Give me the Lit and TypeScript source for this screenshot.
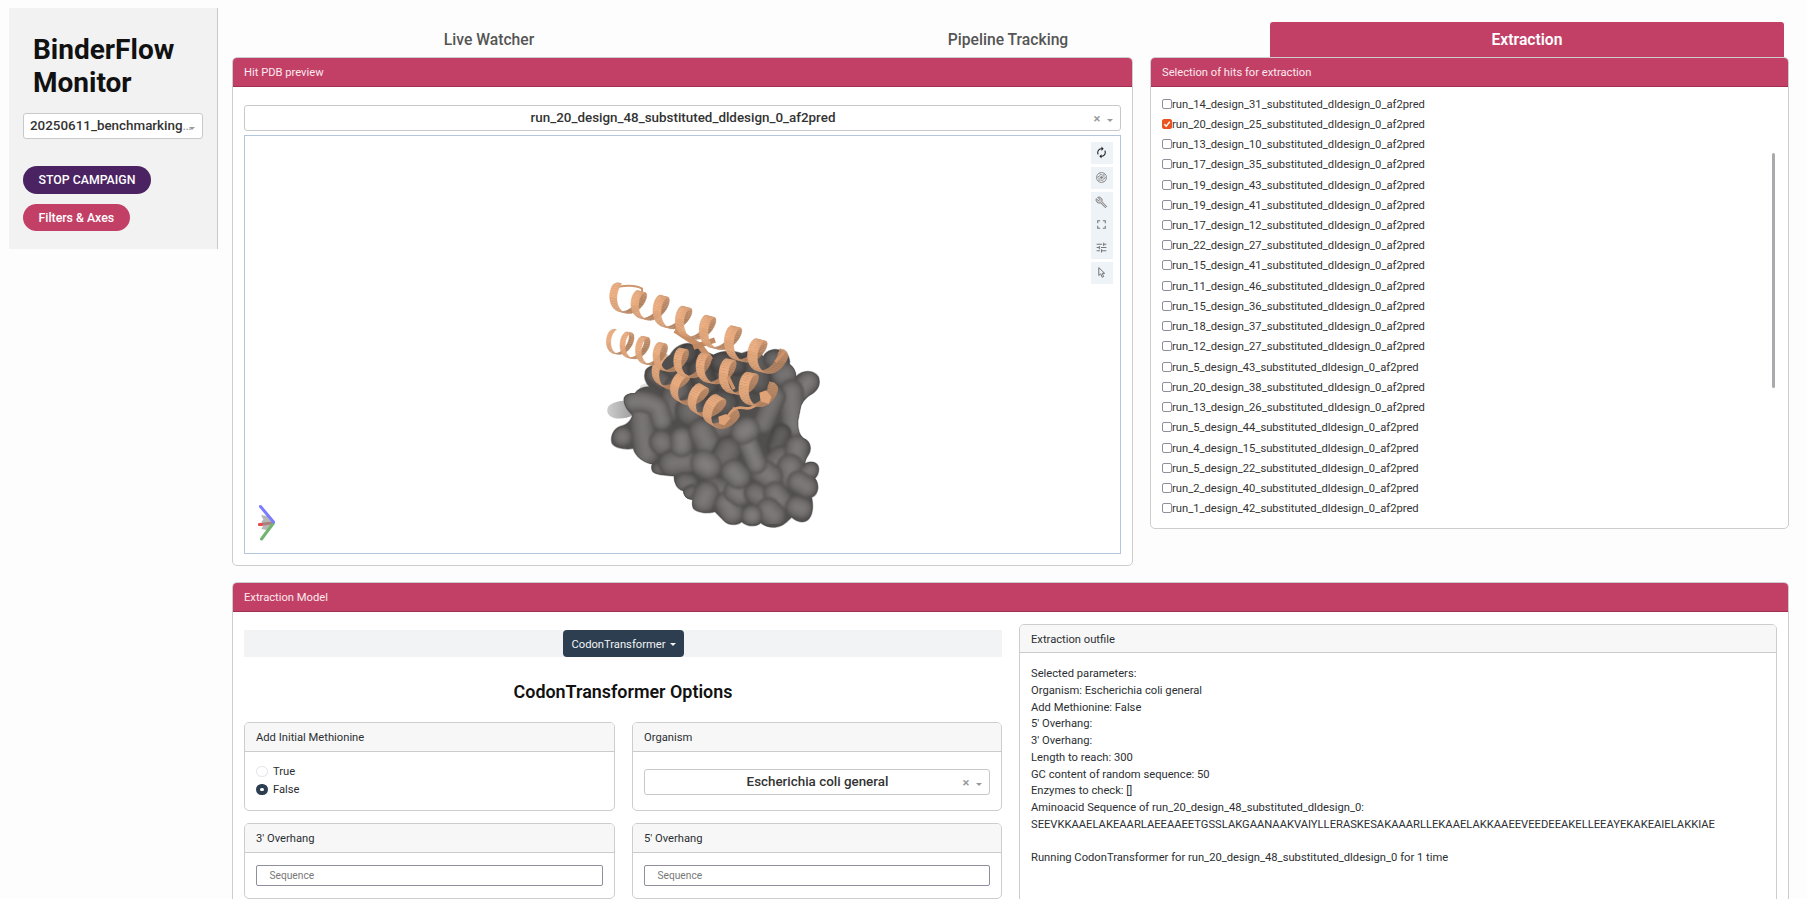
import { LitElement, html, svg, css } from "lit";
import { customElement, property } from "lit/decorators.js";

type Pt = [number, number];

/* ---------- protein scene ---------- */

const SURFACE =
  "M165,340C165,322 185,318 205,310L240,285C260,250 300,240 320,262L370,285C400,270 430,272 455,280C480,270 505,270 520,290C530,268 560,262 580,275C600,285 600,305 598,312C615,325 618,340 618,350C635,330 670,328 685,350C695,375 680,395 660,405C645,415 635,430 632,440L624,480C622,510 628,525 640,535C665,545 665,570 655,585C645,600 645,607 645,611C660,602 685,605 686,625C687,640 680,650 675,655C690,675 685,705 665,712C670,735 670,770 650,782C635,790 620,785 605,772C590,785 580,800 555,802C530,803 520,795 512,788C500,802 470,800 455,785C445,795 420,798 405,785C395,775 385,765 375,755C355,762 320,758 310,745C305,735 308,725 308,718C290,720 280,705 280,692C262,688 252,670 252,648C225,645 190,645 186,630C183,620 187,612 187,612C165,610 135,590 130,565C110,570 75,565 66,550C60,530 70,505 95,498C110,495 125,480 128,465C115,455 100,435 102,415C108,400 125,400 135,400C145,385 160,380 178,380C165,365 162,350 165,340Z";

/* [centre line, thickness, brightness] */
const LOBES: [string, number, number][] = [
  ["M296,290L300,272", 52, 0.7],
  ["M390,305L440,315", 66, 0.74],
  ["M330,330L350,380", 76, 0.74],
  ["M500,300L505,365", 80, 0.8],
  ["M550,298L565,305", 60, 0.9],
  ["M578,345L588,340", 72, 0.97],
  ["M655,365L632,392", 66, 1.03],
  ["M605,395L610,500", 74, 1],
  ["M555,410L520,490", 66, 0.97],
  ["M575,520L560,560", 60, 0.8],
  ["M192,345L220,365", 56, 0.85],
  ["M260,390L240,450", 84, 0.9],
  ["M300,450L300,455", 90, 0.92],
  ["M390,430L405,430", 84, 0.8],
  ["M155,460L160,520L170,580", 78, 0.98],
  ["M130,425C160,420 190,430 205,445L215,480", 66, 1.02],
  ["M97,530L97,530", 64, 1],
  ["M213,545L216,550", 74, 1],
  ["M205,628L225,625", 46, 0.88],
  ["M245,610L285,605", 80, 0.98],
  ["M275,535L275,558", 68, 1.04],
  ["M385,505L400,500", 74, 0.92],
  ["M335,515L350,545", 80, 1],
  ["M405,590L415,570", 84, 0.92],
  ["M283,668L295,670", 64, 0.94],
  ["M297,700L305,695", 44, 0.9],
  ["M575,600L560,615", 88, 0.98],
  ["M622,560L618,590", 72, 1.02],
  ["M605,650L600,620", 80, 1.02],
  ["M662,630L650,640", 50, 1],
  ["M520,635L540,650", 78, 1.02],
  ["M370,680L405,690", 70, 0.94],
  ["M340,722L350,700", 76, 1.02],
  ["M425,757L410,730", 74, 1.02],
  ["M435,695L450,705", 70, 1.02],
  ["M495,700L510,710", 68, 0.98],
  ["M555,700L570,720", 72, 1.02],
  ["M635,745L620,740", 68, 1.02],
  ["M650,680L625,665", 68, 1.02],
  ["M550,765L535,750", 76, 1.02],
  ["M486,766L486,766", 64, 1.05],
  ["M430,635L445,650", 76, 1.04],
  ["M342,610L354,618", 82, 1.06],
  ["M475,550L500,612", 62, 1.04],
  ["M460,516L472,508", 76, 1.06],
];

const LOBE_STEPS: [number, number][] = [
  [1, 80],
  [0.94, 87],
  [0.86, 94],
  [0.76, 101],
  [0.64, 107],
  [0.5, 112],
  [0.36, 116],
  [0.2, 119],
];

const gray = (v: number) => {
  const n = Math.round(v);
  return `rgb(${n + 2},${n - 1},${n - 2})`;
};

const lobe = ([d, w, b]: [string, number, number]) =>
  LOBE_STEPS.map(
    ([k, v]) => svg`<path d=${d} stroke=${gray(v * b)} stroke-width=${w * k}></path>`
  );

interface Quad { z: number; d: string; fill: string; }

/* Ribbon wound round an axis; one axis point per turn. */
function helix(axis: Pt[], r0: number, r1: number, w0: number, w1: number, tilt: number): Quad[] {
  const N = 32;
  const total = (axis.length - 1) * N;
  const at = (s: number): Pt => {
    const i = Math.max(0, Math.min(axis.length - 2, Math.floor(s)));
    const f = s - i;
    return [axis[i][0] + (axis[i + 1][0] - axis[i][0]) * f, axis[i][1] + (axis[i + 1][1] - axis[i][1]) * f];
  };
  const first = axis[0];
  const last = axis[axis.length - 1];
  const len = Math.hypot(last[0] - first[0], last[1] - first[1]);
  const a: Pt = [(last[0] - first[0]) / len, (last[1] - first[1]) / len];
  const p: Pt = [a[1], -a[0]];
  const edge = (i: number) => {
    const s = i / N;
    const k = i / total;
    const th = s * Math.PI * 2;
    const r = r0 + (r1 - r0) * k;
    const taper = Math.min(1, 0.35 + i / 6, 0.35 + (total - i) / 6);
    const w = ((w0 + (w1 - w0) * k) / 2) * taper;
    const c = at(s);
    const up = Math.cos(th) * r;
    const along = Math.sin(th) * r * -tilt;
    const x = c[0] + p[0] * up + a[0] * along;
    const y = c[1] + p[1] * up + a[1] * along;
    const wx = a[0] * w + p[0] * w * 0.15;
    const wy = a[1] * w + p[1] * w * 0.15;
    return { l: [x - wx, y - wy] as Pt, h: [x + wx, y + wy] as Pt, z: Math.sin(th), c: Math.cos(th) };
  };
  const out: Quad[] = [];
  for (let i = 0; i < total; i++) {
    const e = edge(i);
    const f = edge(i + 1);
    const z = (e.z + f.z) / 2;
    const facing = Math.abs(z);
    const light = z > 0 ? 0.88 + 0.12 * Math.pow(facing, 0.6) : 0.86 - 0.09 * facing;
    const v = light + (e.c > 0 ? 0.01 : -0.02);
    out.push({
      z,
      d: [e.l, e.h, f.h, f.l].map((q) => q.map((n) => n.toFixed(1)).join(",")).join(" "),
      fill: `rgb(${Math.round(231 * v)},${Math.round(170 * v)},${Math.round(126 * v)})`,
    });
  }
  return out.sort((m, n) => m.z - n.z);
}

const HELICES = [
  helix([[205, 312], [262, 374], [318, 410], [368, 444], [408, 476]], 38, 42, 24, 30, 0.6),
  helix([[66, 242], [107, 252], [154, 266], [205, 286], [268, 304], [335, 320], [408, 338], [472, 380], [528, 408]], 35, 44, 13, 31, 0.6),
  helix([[76, 106], [140, 132], [207, 146], [274, 180], [345, 208], [422, 240], [497, 280], [558, 308]], 39, 44, 22, 31, 0.6),
];

const ribbon = (quads: Quad[]) =>
  quads.map((q) => svg`<polygon points=${q.d} fill=${q.fill} stroke=${q.fill} stroke-width="1"></polygon>`);

@customElement("protein-scene")
class ProteinScene extends LitElement {
  static styles = css`
    :host { display: block; width: 250px; height: 280px; }
    svg { display: block; width: 250px; height: 280px; }
  `;
  render() {
    return html`<svg viewBox="0 0 750 840">
      <defs>
        <clipPath id="surf"><path d=${SURFACE}></path></clipPath>
        <filter id="soft" x="-5%" y="-5%" width="110%" height="110%"><feGaussianBlur stdDeviation="2.8"></feGaussianBlur></filter>
        <linearGradient id="fog" x1="0" x2="1" y1="0" y2="0">
          <stop offset="0" stop-color="#cdcdcd"></stop>
          <stop offset="1" stop-color="#9c9c9c"></stop>
        </linearGradient>
      </defs>
      <path d="M150,378C165,366 185,368 190,380L150,395Z" fill="#e2e2e2"></path>
      <path d="M52,448C54,430 80,425 108,420L132,465C112,475 90,478 72,474C58,470 50,460 52,448Z" fill="url(#fog)"></path>
      <path d=${SURFACE} fill="#514f4e"></path>
      <g clip-path="url(#surf)"><g filter="url(#soft)" fill="none" stroke-linecap="round" stroke-linejoin="round">${LOBES.map(lobe)}</g></g>
      <path d=${SURFACE} fill="none" stroke="#454342" stroke-opacity=".45" stroke-width="4"></path>
      <path d="M255,210C280,225 300,240 330,258L362,300" fill="none" stroke="#c98f66" stroke-width="18"></path>
      <path d="M310,262L375,240" fill="none" stroke="#c08860" stroke-width="16"></path>
      ${ribbon(HELICES[0])}
      <path d="M408,478C425,445 440,440 462,444C490,450 500,428 532,420" fill="none" stroke="#d99c70" stroke-width="8"></path>
      ${ribbon(HELICES[1])}
      <path d="M385,470L408,462L422,474L404,496L388,492Z" fill="#dfa276"></path>
      <path d="M508,398L528,391L545,410L536,432L512,424Z" fill="#e0a377"></path>
      <path d="M414,350L432,388" stroke="#cf936a" stroke-width="10"></path>
      <path d="M84,80C110,76 140,76 156,86L156,130" fill="none" stroke="#d0966c" stroke-width="6"></path>
      ${ribbon(HELICES[2])}
      <path d="M556,306L583,276" stroke="#cf936a" stroke-width="8"></path>
    </svg>`;
  }
}

/* ---------- small widgets ---------- */

@customElement("pick-box")
class PickBox extends LitElement {
  static styles = css`
    :host { display: flex; box-sizing: border-box; height: 26px; border: 1px solid #c9c9c9; border-radius: 3px; background: #fff;
      align-items: center; font: 500 13.4px Roboto, sans-serif; color: #333; padding: 0 7px 0 5px; }
    .value { flex: 1; text-align: center; white-space: nowrap; padding-left: 25px; line-height: 22px; margin-top: -1px; }
    .value.left { text-align: left; padding-left: 1px; }
    .more { color: #999; font-weight: 400; }
    .x { font-size: 13px; color: #999; width: 12px; text-align: center; }
    .arrow { width: 0; border: 3px solid transparent; border-top-color: #999; border-bottom: 0; margin: 4px 0 0 4px; }
    .left ~ .arrow { margin-left: -8px; }
  `;
  @property() value = "";
  @property({ type: Boolean }) compact = false;
  render() {
    return html`<span class="value ${this.compact ? "left" : ""}">${this.value}${this.compact ? html`<span class="more">…</span>` : ""}</span>
      ${this.compact ? "" : html`<span class="x">×</span>`}<span class="arrow"></span>`;
  }
}

@customElement("panel-card")
class PanelCard extends LitElement {
  static styles = css`
    :host { display: flex; flex-direction: column; box-sizing: border-box; border: 1px solid #cdcdcf; border-radius: 5px; background: #fff; }
    .head { box-sizing: border-box; height: 29px; flex: none; padding: 0 11px; line-height: 29px; font-size: 11.2px;
      background: #f7f7f7; border-bottom: 1px solid #cbcbcd; border-radius: 4px 4px 0 0; color: #2c2f33; }
    :host([short]) .head { height: 28px; line-height: 29px; }
    .head.main { background: #c24066; border-bottom-color: #a0304f; color: #fbe9ef; }
  `;
  @property() heading = "";
  @property({ type: Boolean }) main = false;
  render() {
    return html`<div class="head ${this.main ? "main" : ""}">${this.heading}</div><slot></slot>`;
  }
}

const HITS = [
  "14_design_31", "20_design_25", "13_design_10", "17_design_35", "19_design_43", "19_design_41", "17_design_12",
  "22_design_27", "15_design_41", "11_design_46", "15_design_36", "18_design_37", "12_design_27", "5_design_43",
  "20_design_38", "13_design_26", "5_design_44", "4_design_15", "5_design_22", "2_design_40", "1_design_42",
];

const LOG = [
  "Selected parameters:",
  "Organism: Escherichia coli general",
  "Add Methionine: False",
  "5' Overhang:",
  "3' Overhang:",
  "Length to reach: 300",
  "GC content of random sequence: 50",
  "Enzymes to check: []",
  "Aminoacid Sequence of run_20_design_48_substituted_dldesign_0:",
  "SEEVKKAAELAKEAARLAEEAAEETGSSLAKGAANAAKVAIYLLERASKESAKAAARLLEKAAELAKKAAEEVEEDEEAKELLEEAYEKAKEAIELAKKIAE",
  "",
  "Running CodonTransformer for run_20_design_48_substituted_dldesign_0 for 1 time",
];

const ICON = {
  spin: svg`<path fill="#222" d="M12 6v3l4-4-4-4v3c-4.42 0-8 3.58-8 8 0 1.57.46 3.03 1.24 4.26L6.7 14.8c-.45-.83-.7-1.79-.7-2.8 0-3.31 2.69-6 6-6zm6.76 1.74L17.3 9.2c.44.84.7 1.79.7 2.8 0 3.31-2.69 6-6 6v-3l-4 4 4 4v-3c4.42 0 8-3.58 8-8 0-1.57-.46-3.03-1.24-4.26z"></path>`,
  iris: svg`<g fill="none" stroke="#777" stroke-width="1.5"><circle cx="12" cy="12" r="9.2"></circle><path d="M14.3 8l-6-2.9M16.6 12l-.3-7M14.3 16l5.8-4M9.7 16l6 2.9M7.4 12l.3 7M9.7 8l-5.8 4"></path></g><circle cx="12" cy="12" r="2.4" fill="#777"></circle>`,
  wrench: svg`<path fill="#ccc" stroke="#777" stroke-width="1.7" d="M21.6 19.2l-8.9-8.9c.9-2.3.4-4.900-1.300-6.600C9.600 1.900 7 1.600 5 2.600L8.700 6.300 6.300 8.700 2.600 5C1.600 7 1.900 9.600 3.700 11.400c1.700 1.700 4.300 2.200 6.600 1.300l8.900 8.900z"></path>`,
  expand: svg`<path fill="none" stroke="#777" stroke-width="2" d="M5 9.500V5h4.500M14.500 5H19v4.500M19 14.500V19h-4.500M9.500 19H5v-4.500"></path>`,
  tune: svg`<path fill="#777" d="M3 17v2h6v-2H3zM3 5v2h10V5H3zm10 16v-2h8v-2h-8v-2h-2v6h2zM7 9v2H3v2h4v2h2V9H7zm14 4v-2H11v2h10zm-6-4h2V7h4V5h-4V3h-2v6z"></path>`,
  cursor: svg`<path fill="none" stroke="#666" stroke-width="1.7" d="M7 3v14.500l3.500-3 2.700 6.200 2.800-1.200-2.700-6h4.500z"></path>`,
};
const icon = (g: unknown) => html`<svg class="ico" viewBox="0 0 24 24">${g}</svg>`;

@customElement("app-root")
class AppRoot extends LitElement {
  static styles = css`
    :host { display: block; height: 899px; overflow: hidden; background: #fdfdfd; font-family: Roboto, sans-serif; color: #2c2f33; font-size: 11.2px; }
    .page { display: flex; align-items: flex-start; padding: 8px 18px 0 9px; gap: 14px; }
    .side { box-sizing: border-box; width: 209px; height: 241px; flex: none; background: #f2f2f2; border-right: 1px solid #c8c8c8; padding: 25px 14px 0; }
    h1 { margin: 0 0 14px 10px; font-size: 28px; line-height: 33px; font-weight: 700; color: #111; height: 66px; }
    .pill { display: flex; width: max-content; box-sizing: border-box; align-items: center; border-radius: 14px; padding: 0 15.5px; font-size: 12.32px; font-weight: 500; color: #fff; background: #c24066; height: 27px; }
    .stop { background: #4b2362; margin: 27px 0 10px; height: 28px; }
    .content { flex: 1; min-width: 0; }
    .tabs { display: grid; grid-template-columns: repeat(3, 514px); gap: 5px; padding-top: 14px; height: 35px; }
    .tab { display: flex; align-items: center; justify-content: center; font-size: 15.68px; font-weight: 500; color: #555; height: 35px; }
    .tab.on { background: #c24066; color: #fff; border-radius: 3px 3px 0 0; font-weight: 600; }
    .row { display: flex; align-items: flex-start; gap: 17px; }
    .preview { width: 901px; height: 509px; flex: none; }
    .previewbody { display: flex; flex-direction: column; gap: 4px; padding: 18px 11px 11px; flex: 1; }
    .viewer { position: relative; flex: 1; border: 1px solid #b3c6dc; background: #fff; overflow: hidden; }
    protein-scene { position: absolute; left: 345px; top: 124px; }
    .axes { position: absolute; left: 10px; top: 366px; width: 24px; height: 40px; }
    .tools { position: absolute; right: 7px; top: 6px; display: flex; flex-direction: column; gap: 3px; }
    .grp { width: 22px; height: 22px; background: #eef3f8; display: flex; flex-direction: column; align-items: center; }
    .cell { height: 20px; display: flex; align-items: center; flex: none; }
    .cell.mid { height: 25px; }
    .grp.three { height: 67px; }
    .ico { width: 13px; height: 13px; display: block; margin-right: 1px; }
    .hits { flex: 1; height: 472px; }
    .hitbody { display: flex; padding: 7px 13px 0 11px; justify-content: space-between; }
    .hit { display: flex; align-items: center; height: 20.24px; color: #333; }
    .box { width: 10px; height: 10px; box-sizing: border-box; border: 1px solid #8f8f9d; border-radius: 2px; background: #fff; flex: none; margin-top: -1px; }
    .box.on { background: #e95420; border-color: #e95420; }
    .box svg { display: block; width: 8px; height: 8px; }
    .bar { width: 3px; height: 235px; border-radius: 2px; background: #a8aaab; margin-top: 59px; }
    .model { height: 400px; margin-top: 16px; }
    .modelbody { display: flex; padding: 12px 11px 0; gap: 17px; }
    .left { width: 758px; flex: none; padding-top: 6px; }
    .nav { background: #f1f3f5; display: flex; justify-content: center; height: 27px; }
    .drop { box-sizing: border-box; width: 121px; background: #2c3e50; color: #f1f3f5; border-radius: 4px; display: flex; align-items: center; justify-content: center; gap: 4px; padding: 1px 0 0 1px; }
    .caret { border: 3px solid transparent; border-top-color: currentColor; border-bottom: 0; }
    h2 { margin: 22px 0 18px; font-size: 17.92px; line-height: 25px; font-weight: 600; color: #111; text-align: center; }
    .grid { display: grid; grid-template-columns: 371px 370px; gap: 12px 17px; }
    .opt { height: 89px; }
    .opt.low { height: 76px; }
    .radios { padding: 10px 11px; }
    .radio { display: flex; align-items: center; gap: 5px; height: 18px; }
    .dot { box-sizing: border-box; width: 12px; height: 11px; border-radius: 6px; border: 1px solid #dfe2e6; background: #fff; }
    .dot.on { border: 4px solid #2c3e50; }
    .selwrap { padding: 17px 11px 0 11px; }
    .field { box-sizing: border-box; display: flex; align-items: center; height: 23px; margin: 12px 11px; border: 1px solid #8f8f9d; border-radius: 2px; padding-left: 12.5px; font-size: 10.2px; color: #777; }
    .out { flex: 1; height: 340px; }
    .log { padding: 13px 11px; line-height: 16.77px; white-space: pre; height: 300px; }
    .line { height: 16.77px; }
  `;
  render() {
    return html`<div class="page">
      <aside class="side">
        <h1>BinderFlow<br />Monitor</h1>
        <pick-box compact value="20250611_benchmarking"></pick-box>
        <div class="pill stop">STOP CAMPAIGN</div>
        <div class="pill">Filters &amp; Axes</div>
      </aside>
      <main class="content">
        <nav class="tabs">
          <div class="tab">Live Watcher</div>
          <div class="tab">Pipeline Tracking</div>
          <div class="tab on">Extraction</div>
        </nav>
        <div class="row">
          <panel-card class="preview" main heading="Hit PDB preview">
            <div class="previewbody">
              <pick-box value="run_20_design_48_substituted_dldesign_0_af2pred"></pick-box>
              <div class="viewer">
                <protein-scene></protein-scene>
                <svg class="axes" viewBox="0 0 24 40">
                  <path d="M6 13l6 1 5.500 7-6 7-5-1 2-4-2-4 2-1z" fill="#999" fill-opacity=".7"></path>
                  <g stroke-width="3" stroke-linecap="round">
                    <path d="M4.500 22.500L17 21" stroke="#a88080"></path>
                    <path d="M4.500 22.500h2" stroke="#f04848"></path>
                    <path d="M6.500 37L18.500 21" stroke="#72b372"></path>
                    <path d="M5.500 4.500L18.500 20" stroke="#7b7bff"></path>
                  </g>
                </svg>
                <div class="tools">
                  <div class="grp"><div class="cell">${icon(ICON.spin)}</div></div>
                  <div class="grp"><div class="cell">${icon(ICON.iris)}</div></div>
                  <div class="grp three">
                    <div class="cell">${icon(ICON.wrench)}</div>
                    <div class="cell mid">${icon(ICON.expand)}</div>
                    <div class="cell">${icon(ICON.tune)}</div>
                  </div>
                  <div class="grp"><div class="cell">${icon(ICON.cursor)}</div></div>
                </div>
              </div>
            </div>
          </panel-card>
          <panel-card class="hits" main heading="Selection of hits for extraction">
            <div class="hitbody">
              <div>
                ${HITS.map((h, i) => html`<div class="hit"><span class="box ${i === 1 ? "on" : ""}">${i === 1
                  ? html`<svg viewBox="0 0 8 8"><path d="M1.300 4.200l1.900 1.900L6.800 1.800" fill="none" stroke="#fff" stroke-width="1.400"></path></svg>`
                  : ""}</span>run_${h}_substituted_dldesign_0_af2pred</div>`)}
              </div>
              <div class="bar"></div>
            </div>
          </panel-card>
        </div>
        <panel-card class="model" main heading="Extraction Model">
          <div class="modelbody">
            <div class="left">
              <div class="nav"><div class="drop">CodonTransformer<span class="caret"></span></div></div>
              <h2>CodonTransformer Options</h2>
              <div class="grid">
                <panel-card class="opt" heading="Add Initial Methionine">
                  <div class="radios">
                    <div class="radio"><span class="dot"></span>True</div>
                    <div class="radio"><span class="dot on"></span>False</div>
                  </div>
                </panel-card>
                <panel-card class="opt" heading="Organism">
                  <div class="selwrap"><pick-box value="Escherichia coli general"></pick-box></div>
                </panel-card>
                <panel-card class="opt low" heading="3' Overhang"><div class="field">Sequence</div></panel-card>
                <panel-card class="opt low" heading="5' Overhang"><div class="field">Sequence</div></panel-card>
              </div>
            </div>
            <panel-card class="out" short heading="Extraction outfile">
              <div class="log">${LOG.map((l) => html`<div class="line">${l}</div>`)}</div>
            </panel-card>
          </div>
        </panel-card>
      </main>
    </div>`;
  }
}
